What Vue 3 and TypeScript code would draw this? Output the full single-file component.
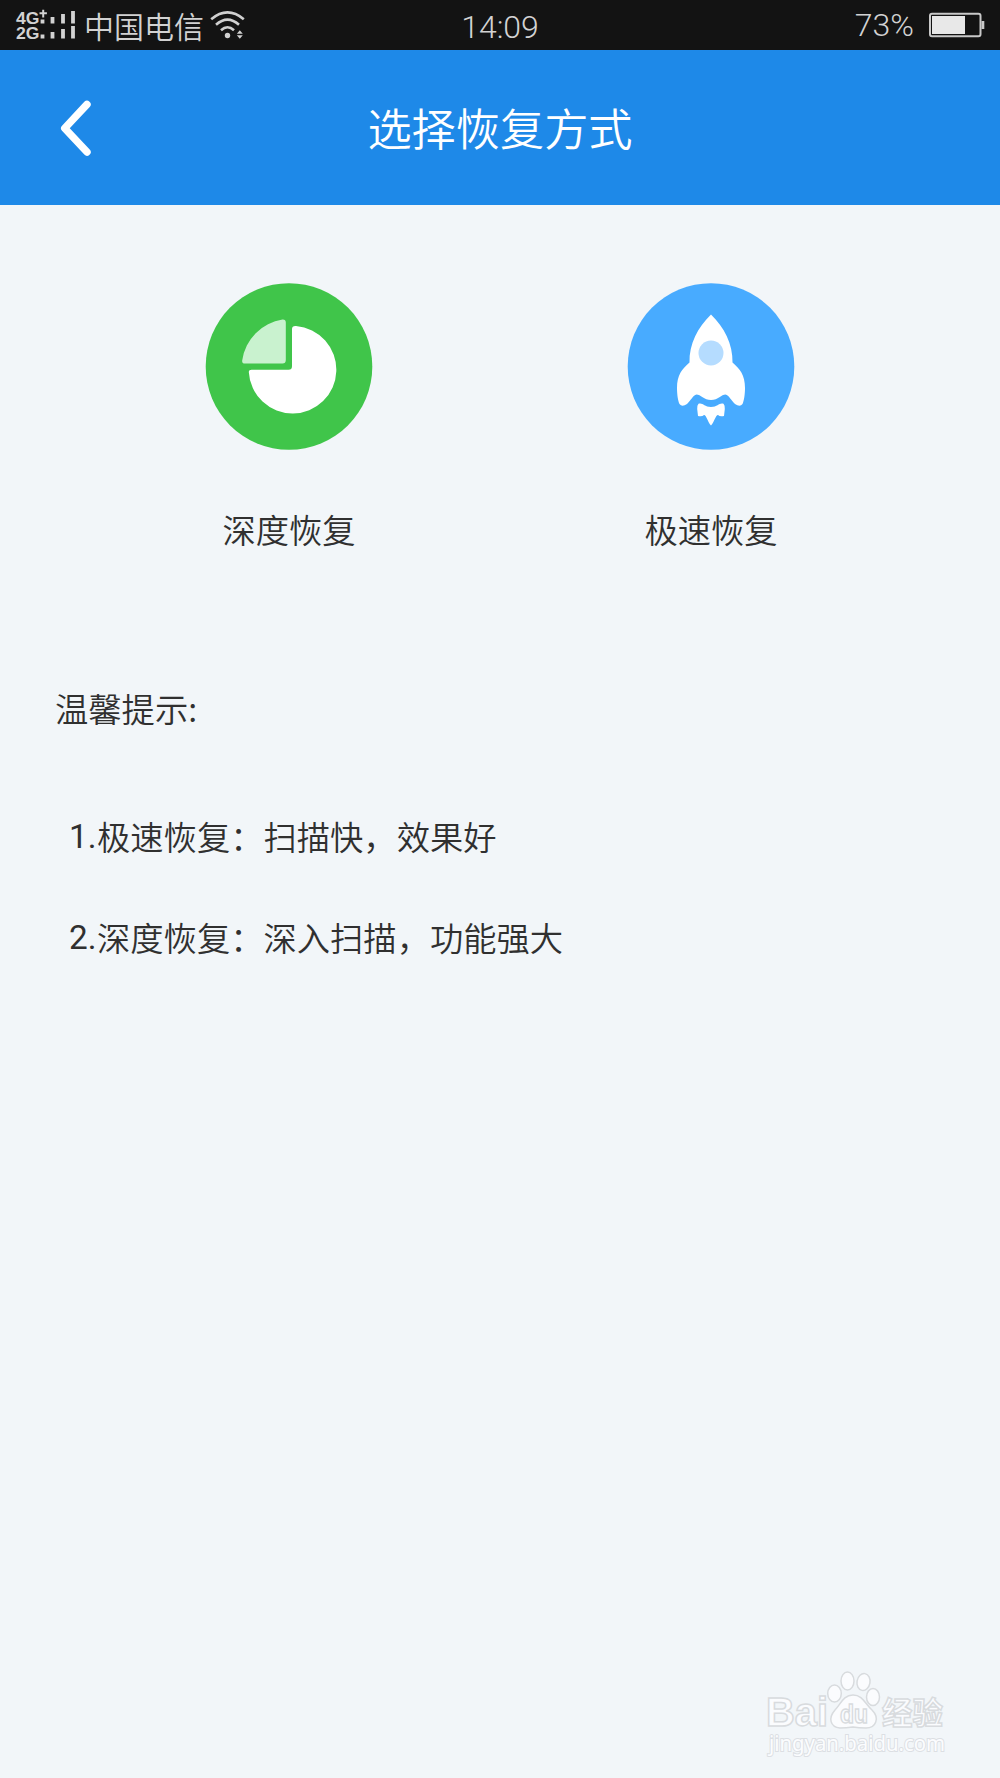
<script setup lang="ts">
interface Tip {
  no: string
  text: string
}

const tips: Tip[] = [
  { no: '1.', text: '极速恢复：扫描快，效果好' },
  { no: '2.', text: '深度恢复：深入扫描，功能强大' },
]
</script>

<template>
  <div class="screen">
    <div class="status">
      <div class="status-left">
        <svg class="signal" width="62" height="50" viewBox="0 0 62 50">
          <g class="net">
            <text x="1" y="23.5" textLength="23.5" lengthAdjust="spacingAndGlyphs">4G</text>
            <text x="1" y="38.5" textLength="23.5" lengthAdjust="spacingAndGlyphs">2G</text>
          </g>
          <path d="M24.5 13.3h7.4M28.2 9.8v7.6" stroke="#d2d2d2" stroke-width="2" />
          <path
            d="M27.5 19.5v4M37.500 17v6.500M48 14v9.500M58 11v12.500M27.500 34.500v4M37.500 32v6.500M48 29v9.500M58 26v12.500"
            stroke="#d2d2d2"
            stroke-width="3.8"
          />
        </svg>
        <span class="carrier">中国电信</span>
        <svg class="wifi" width="36" height="50" viewBox="0 0 36 50">
          <g fill="none" stroke="#d0d0d0" stroke-width="2.6">
            <path d="M1.2 19.2Q17.500 5.500 33.800 19.200" />
            <path d="M6 24.800Q17.500 14.500 29 24.800" />
            <path d="M11 30.300Q17.500 24.200 24 30.300" />
          </g>
          <circle cx="17.500" cy="35.500" r="2.700" fill="#d0d0d0" />
          <path d="M26.800 33.700L29.800 30.200 32.800 33.700ZM26.800 35.200L29.800 38.700 32.800 35.200Z" fill="#d0d0d0" />
        </svg>
      </div>
      <span class="time">14:09</span>
      <div class="status-right">
        <span class="percent">73%</span>
        <svg width="56" height="50" viewBox="0 0 56 50">
          <rect x="1" y="13.800" width="50.500" height="22.400" rx="2" fill="none" stroke="#c9c9c9" stroke-width="2" />
          <rect x="3" y="16" width="33" height="18" fill="#e8e8e8" />
          <rect x="52.500" y="21" width="2.800" height="8" fill="#c9c9c9" />
        </svg>
      </div>
    </div>

    <header class="header">
      <svg class="back" width="40" height="60" viewBox="0 0 40 60">
        <path
          d="M32 6.400L9.700 30.200 32 54"
          fill="none"
          stroke="#fff"
          stroke-width="7.400"
          stroke-linecap="round"
          stroke-linejoin="round"
        />
      </svg>
      <h1>选择恢复方式</h1>
    </header>

    <main>
      <div class="modes">
        <div class="mode">
          <svg width="168" height="168" viewBox="0 0 168 168">
            <circle cx="84" cy="83.500" r="83.300" fill="#40c54a" />
            <path
              d="M77.500 36.500Q80.800 36.300 80.800 39.500V77Q80.800 80.500 77.500 80.500H40Q36.500 80.500 37.300 77A48 48 0 0 1 77.500 36.500Z"
              fill="#c9f2cf"
            />
            <path
              d="M91 43A43.800 43.800 0 1 1 43.800 89Q43.600 86.700 46.500 86.700H83.500Q87 86.700 87 83.200V46Q87 42.700 91 43Z"
              fill="#fff"
            />
          </svg>
          <span>深度恢复</span>
        </div>
        <div class="mode">
          <svg width="168" height="168" viewBox="0 0 168 168">
            <circle cx="84" cy="83.500" r="83.300" fill="#48abff" />
            <path
              d="M84 31.500C97 44 106 61 105.500 79.500C113 86 118 92 118 105C118 111 117 118 115.500 121Q113 124.500 108 121C104 117.500 102 112 98.500 111.500C94.500 111.500 91 117 84 117C77 117 73.500 111.500 69.500 111.500C66 112 64 117.500 60 121Q55 124.500 52.500 121C51 118 50 111 50 105C50 92 55 86 62.500 79.500C62 61 71 44 84 31.500Z"
              fill="#fff"
            />
            <circle cx="84" cy="70" r="12.500" fill="#b5dcff" />
            <path
              d="M71.500 120.800C76 119.500 77 124 84 124C91 124 92 119.500 96.500 120.800Q98 122 97.800 126L97 133Q93 134 91 132C88.500 132 87 140 84 142.500C81 140 79.500 132 77 132Q75 134 71 133L70.200 126Q70 122 71.500 120.800Z"
              fill="#fff"
            />
          </svg>
          <span>极速恢复</span>
        </div>
      </div>

      <section class="tips">
        <h2>温馨提示:</h2>
        <p v-for="tip in tips" :key="tip.no">
          <span class="no">{{ tip.no }}</span>{{ tip.text }}
        </p>
      </section>
    </main>

    <svg class="watermark" width="194" height="92" viewBox="-4 0 194 92">
      <g class="outlined">
        <text class="brand" x="-1" y="56" textLength="62" lengthAdjust="spacingAndGlyphs">Bai</text>
        <ellipse cx="67.500" cy="23.500" rx="6.800" ry="8.500" />
        <ellipse cx="80.500" cy="11" rx="6.500" ry="9" />
        <ellipse cx="96.500" cy="12" rx="6.500" ry="8.500" transform="rotate(10 96.500 12)" />
        <ellipse cx="106" cy="27" rx="6.500" ry="8.500" />
        <path d="M86 25C96 25 98 34 105 40C113 48 109 58 99 58Q92 58 86 57Q79 58 73 58C63 57 61 48 68 40C74 34 76 25 86 25Z" />
        <text class="jy" x="115" y="54" textLength="61" lengthAdjust="spacingAndGlyphs">经验</text>
        <text class="du" x="73" y="53" textLength="28" lengthAdjust="spacingAndGlyphs">du</text>
      </g>
      <text class="url" x="2" y="81" textLength="176" lengthAdjust="spacingAndGlyphs">jingyan.baidu.com</text>
    </svg>
  </div>
</template>

<style>
body {
  margin: 0;
  background: #f2f6f9;
}
</style>

<style scoped>
.screen {
  position: relative;
  height: 1778px;
  background: #f2f6f9;
  color: #303030;
  font-family: 'Noto Sans CJK SC', sans-serif;
  font-weight: 350;
  overflow: hidden;
}

.status {
  display: grid;
  grid-template-columns: 1fr auto 1fr;
  align-items: center;
  height: 50px;
  padding: 0 15px;
  background: #131313;
  color: #d2d2d2;
}

.status svg {
  display: block;
}

.status-left,
.status-right {
  display: flex;
  align-items: center;
}

.status-right {
  justify-content: flex-end;
}

.net {
  font: bold 16.500px 'Liberation Sans', sans-serif;
  fill: #d2d2d2;
}

.carrier {
  margin-left: 7px;
  font-size: 30px;
  line-height: 50px;
}

.wifi {
  margin-left: 6px;
}

.time,
.percent {
  font-family: Roboto, sans-serif;
  font-size: 32px;
}

.time {
  padding-top: 4px;
  line-height: 46px;
}

.percent {
  margin-right: 15px;
  line-height: 50px;
}

.header {
  display: grid;
  grid-template-columns: 100px 1fr 100px;
  align-items: center;
  height: 155px;
  background: #1e89e8;
}

.back {
  margin-left: 55px;
}

h1 {
  margin: -2px 0 0;
  color: #fff;
  font-size: 44.200px;
  font-weight: 350;
  line-height: 60px;
  text-align: center;
}

.modes {
  display: flex;
  width: 844px;
  margin: 0 auto;
  padding-top: 78px;
}

.mode {
  flex: 1;
  display: flex;
  flex-direction: column;
  align-items: center;
}

.mode span {
  margin-top: 53px;
  font-size: 33.300px;
  line-height: 50px;
}

.tips {
  padding: 129px 0 0 55px;
}

h2 {
  margin: 0 0 78px;
  font-size: 33.300px;
  font-weight: 350;
  line-height: 50px;
}

p {
  display: flex;
  margin: 0 0 51px 14px;
  font-size: 33.300px;
  line-height: 50px;
}

.no {
  width: 28px;
  padding-top: 2px;
  font-family: Roboto, 'Noto Sans', sans-serif;
  font-weight: 400;
  line-height: 48px;
}

.watermark {
  position: absolute;
  left: 763px;
  top: 1670px;
}

.outlined {
  fill: #fbfcfe;
  stroke: #d8dbde;
  stroke-width: 1.500px;
}

.brand {
  font: bold 40px 'Liberation Sans', sans-serif;
}

.jy {
  font: bold 31px 'Noto Sans CJK SC', sans-serif;
}

.du {
  font: bold 26px 'Liberation Sans', sans-serif;
}

.url {
  font: 400 21px 'Noto Sans', sans-serif;
  fill: #fbfcfe;
  stroke: #dcdfe3;
  stroke-width: 2px;
  paint-order: stroke;
}
</style>
